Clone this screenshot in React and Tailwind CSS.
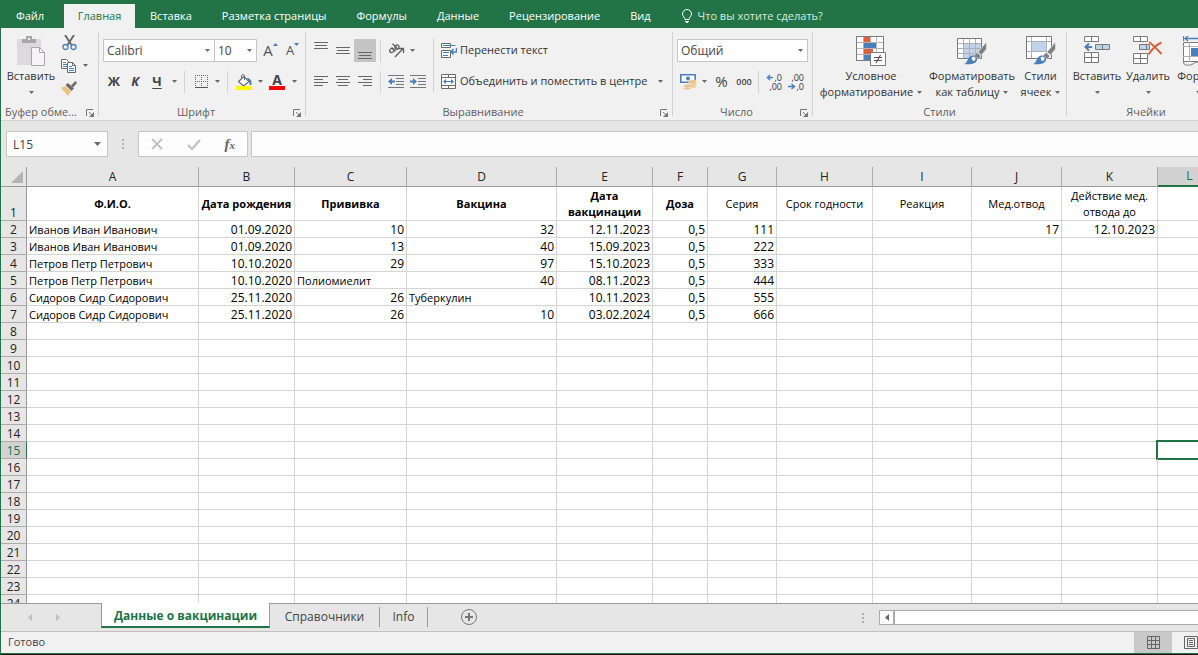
import clsx from 'clsx'

const TABS = ['Вставка', 'Разметка страницы', 'Формулы', 'Данные', 'Рецензирование', 'Вид']

const COLUMNS = [
  { id: 'A', width: 'w-[172px]', title: 'Ф.И.О.', bold: true },
  { id: 'B', width: 'w-[96px]', title: 'Дата рождения', bold: true },
  { id: 'C', width: 'w-[112px]', title: 'Прививка', bold: true },
  { id: 'D', width: 'w-[150px]', title: 'Вакцина', bold: true },
  { id: 'E', width: 'w-[96px]', title: 'Дата вакцинации', bold: true },
  { id: 'F', width: 'w-[55px]', title: 'Доза', bold: true },
  { id: 'G', width: 'w-[69px]', title: 'Серия' },
  { id: 'H', width: 'w-[96px]', title: 'Срок годности' },
  { id: 'I', width: 'w-[99px]', title: 'Реакция' },
  { id: 'J', width: 'w-[90px]', title: 'Мед.отвод' },
  { id: 'K', width: 'w-[96px]', title: 'Действие мед. отвода до' },
  { id: 'L', width: 'w-[64px]', title: '' },
]

const DATA = {
  2: { A: 'Иванов Иван Иванович', B: '01.09.2020', C: '10', D: '32', E: '12.11.2023', F: '0,5', G: '111', J: '17', K: '12.10.2023' },
  3: { A: 'Иванов Иван Иванович', B: '01.09.2020', C: '13', D: '40', E: '15.09.2023', F: '0,5', G: '222' },
  4: { A: 'Петров Петр Петрович', B: '10.10.2020', C: '29', D: '97', E: '15.10.2023', F: '0,5', G: '333' },
  5: { A: 'Петров Петр Петрович', B: '10.10.2020', C: 'Полиомиелит', D: '40', E: '08.11.2023', F: '0,5', G: '444' },
  6: { A: 'Сидоров Сидр Сидорович', B: '25.11.2020', C: '26', D: 'Туберкулин', E: '10.11.2023', F: '0,5', G: '555' },
  7: { A: 'Сидоров Сидр Сидорович', B: '25.11.2020', C: '26', D: '10', E: '03.02.2024', F: '0,5', G: '666' },
}

const ROWS = Array.from({ length: 23 }, (_, i) => i + 2)
const ACTIVE = { row: 15, col: 'L' }

const isNumeric = (value) => /^[\d.,]+$/.test(value)

/* ---------- small pieces ---------- */

const Icon = ({ w, h, children, className }) => (
  <svg width={w} height={h} viewBox={`0 0 ${w} ${h}`} fill="none" className={clsx('shrink-0', className)} aria-hidden="true">
    {children}
  </svg>
)

const Caret = ({ className }) => (
  <Icon w={5} h={3} className={className}>
    <path d="M0 0h5L2.500 3z" fill="#6a6a6a" />
  </Icon>
)

const Tool = ({ label, className, children }) => (
  <button type="button" aria-label={label} className={clsx('flex h-[23px] shrink-0 items-center justify-center', className)}>
    {children}
  </button>
)

const Separator = ({ className, color = 'bg-[#d2d2d2]' }) => <div className={clsx('w-px shrink-0', color, className)} />

const Group = ({ label, launcher, className, labelClass, children }) => (
  <section className={clsx('flex shrink-0 flex-col', className)} aria-label={label}>
    <div className="flex h-[76px]">{children}</div>
    <div className="flex h-4 items-center text-[11px] text-[#5f5f5f]">
      <span className={clsx('flex-1 whitespace-nowrap', labelClass || 'text-center')}>{label}</span>
      {launcher && (
        <button type="button" aria-label={`${label}: параметры`} className="mr-1 pt-px">
          <Icon w={8} h={8}>
            <path d="M.5 7V.5H7M3 3l3 3" stroke="#777" />
            <path d="M8 3v5H3z" fill="#777" />
          </Icon>
        </button>
      )}
    </div>
  </section>
)

const GroupDivider = () => <div className="my-1 w-px shrink-0 bg-[#d2d2d2]" />

const BigButton = ({ icon, lines, className }) => (
  <button type="button" className={clsx('flex shrink-0 flex-col items-center pt-2 leading-4 text-[#333]', className)}>
    <span className="flex h-8 items-start">{icon}</span>
    <span className="whitespace-nowrap">{lines[0]}</span>
    <span className="flex h-4 items-center gap-1 whitespace-nowrap">
      {lines[1]}
      <Caret />
    </span>
  </button>
)

const Combo = ({ label, options, className }) => (
  <div className={clsx('relative flex h-[23px] shrink-0 text-[12px]', className)}>
    <select aria-label={label} className="w-full appearance-none border border-[#c6c6c6] bg-white px-[3px] text-[#444]">
      {options.map((o) => (
        <option key={o}>{o}</option>
      ))}
    </select>
    <Caret className="pointer-events-none absolute top-[10px] right-[5px]" />
  </div>
)

/* ---------- icons ---------- */

const PasteIcon = () => (
  <Icon w={28} h={30}>
    <path d="M0 3h24v26H0z" fill="#dcd8dc" />
    <path d="M5 7V3h4V0h6v3h4v4z" fill="#a9a6a9" />
    <path d="M11 2h2v2h-2z" fill="#f1f1f1" />
    <path d="M14.500 11.500h8l5 5v13h-13z" fill="#f7f3f9" stroke="#a9a6a9" />
    <path d="M22.500 11.500v5h5" stroke="#a9a6a9" />
  </Icon>
)

const CutIcon = () => (
  <Icon w={15} h={16}>
    <path d="M3 0l6.500 10M12 0L5.500 10" stroke="#6a6a6a" strokeWidth="2" />
    <circle cx="3.500" cy="12" r="2.500" stroke="#4a7fb8" strokeWidth="1.300" />
    <circle cx="11.500" cy="12" r="2.500" stroke="#4a7fb8" strokeWidth="1.300" />
  </Icon>
)

const CopyIcon = () => (
  <Icon w={16} h={14}>
    <path d="M.5.500h5l2 2v7h-7z" fill="#fff" stroke="#6a6a6a" />
    <path d="M2 3.500h3M2 5.500h4M2 7.500h4" stroke="#4a7fb8" />
    <path d="M6.500 3.500h5l3 3v7h-8z" fill="#fff" stroke="#6a6a6a" />
    <path d="M11.500 3.500v3h3" stroke="#6a6a6a" />
    <path d="M8 7.500h3M8 9.500h5M8 11.500h5" stroke="#4a7fb8" />
  </Icon>
)

const PainterIcon = () => (
  <Icon w={16} h={15}>
    <path d="M0 7l4-2 6 5-3 5z" fill="#ecc17f" />
    <path d="M4.500 4L7 2l6 5.500L10.500 10z" fill="#6a6a6a" />
    <path d="M10 4.500L14.500 0 16 2l-4 4.500z" fill="#6a6a6a" />
  </Icon>
)

const BordersIcon = () => (
  <Icon w={13} h={13}>
    <path d="M0 .5h13M0 6.500h13" stroke="#6a6a6a" strokeDasharray="1 1" />
    <path d="M.5 0v12M6.500 0v12M12.500 0v12" stroke="#6a6a6a" strokeDasharray="1 1" />
    <path d="M0 12.500h13" stroke="#555" />
  </Icon>
)

const FillIcon = () => (
  <Icon w={16} h={16}>
    <path d="M2.500 7.500L8 2.500l5 5-5.500 4.500z" fill="#fff" stroke="#6a6a6a" strokeWidth="1.200" />
    <path d="M5.500 5V1.500c0-1 3-1 3 0V6" stroke="#6a6a6a" />
    <path d="M11 4c3 0 5 2 4.500 7h-2c0-3-.5-4-1.500-5z" fill="#4a7fb8" />
    <path d="M0 12h16v4H0z" fill="#ff0" />
  </Icon>
)

const HLines = ({ lines, w = 14, h = 13 }) => (
  <Icon w={w} h={h}>
    {lines.map(([x, y, len]) => (
      <path key={y} d={`M${x} ${y}.5h${len}`} stroke="#666" />
    ))}
  </Icon>
)

const IndentIcon = ({ right }) => (
  <Icon w={16} h={14}>
    <path d="M0 .5h16M8 3.500h8M8 6.500h8M8 9.500h8M0 12.500h16" stroke="#777" />
    {right ? (
      <path d="M0 5.500h3V3l4 3.500L3 10V7.500H0z" fill="#4a7fb8" />
    ) : (
      <path d="M7 5.500H4V3L0 6.500 4 10V7.500h3z" fill="#4a7fb8" />
    )}
  </Icon>
)

const OrientationIcon = () => (
  <Icon w={17} h={15}>
    <g stroke="#5f5f5f" strokeWidth="1.300">
      <ellipse cx="3.800" cy="7.500" rx="2.200" ry="1.900" transform="rotate(-45 3.800 7.500)" />
      <path d="M3.500 4.500l4 4" />
      <ellipse cx="9" cy="4.200" rx="2.200" ry="1.900" transform="rotate(-45 9 4.200)" />
      <path d="M4.500.8l5 5" />
      <path d="M7 14l8-8.500M11 5.500h4.500V10" />
    </g>
  </Icon>
)

const WrapIcon = () => (
  <Icon w={16} h={16}>
    <path d="M.5.500h9v4h-9zM.5 7.500h9v7h-9z" fill="#fff" stroke="#6a6a6a" />
    <path d="M2 2.500h12.500M2 9.500h6M2 12.500h5" stroke="#4a7fb8" />
    <path d="M15.500 5v4H10M12.500 6L10 8.800l2.500 2.700" stroke="#4a7fb8" strokeWidth="1.500" />
  </Icon>
)

const MergeIcon = () => (
  <Icon w={16} h={15}>
    <path d="M.5.500h14v14H.5z" fill="#fff" stroke="#6a6a6a" />
    <path d="M.5 3.500h14M.5 11.500h14M7.500.500v3M7.500 11.500v3" stroke="#6a6a6a" />
    <path d="M3 7.500h9" stroke="#4a7fb8" />
    <path d="M2 7.500L5 5v5zM13 7.500L10 5v5z" fill="#4a7fb8" />
  </Icon>
)

const MoneyIcon = () => (
  <Icon w={17} h={16}>
    <path d="M.8.800h14.400v7.400H.8z" fill="#fff" stroke="#4a7fb8" strokeWidth="1.600" />
    <circle cx="8" cy="4.500" r="2" fill="#4a7fb8" />
    <g fill="#ecc17f" stroke="#f1f1f1" strokeWidth=".6">
      <ellipse cx="12.500" cy="12" rx="4" ry="2" />
      <ellipse cx="12.500" cy="10" rx="4" ry="2" />
      <ellipse cx="12.500" cy="7.700" rx="4" ry="2" />
      <ellipse cx="7.500" cy="14" rx="4" ry="1.800" />
      <ellipse cx="7.500" cy="12" rx="4" ry="1.800" />
    </g>
  </Icon>
)

const DecimalIcon = ({ top, bottom, less }) => (
  <svg width="16" height="18" viewBox="0 0 16 18" overflow="visible" aria-hidden="true" className="shrink-0">
    <text x="16" y="8" textAnchor="end" fontSize="9" fill="#333">{top}</text>
    <text x="16" y="17" textAnchor="end" fontSize="9" fill="#333">{bottom}</text>
    {less ? (
      <path d="M0 13.500h6M3.500 11l3 2.500-3 2.500" fill="none" stroke="#4a7fb8" strokeWidth="1.500" />
    ) : (
      <path d="M1.500 4.500H7M4 2L1.500 4.500 4 7" fill="none" stroke="#4a7fb8" strokeWidth="1.500" />
    )}
  </svg>
)

const ConditionalIcon = () => (
  <Icon w={30} h={30}>
    <path d="M.5.500h27v24H.5z" fill="#fff" stroke="#7a7a7a" />
    <path d="M0 6.500h28M0 12.500h28M0 18.500h28M7.500 0v25M14.500 0v25M20.500 0v25" stroke="#b5b5b5" />
    <path d="M8 1h6v5H8zM8 13h9v5H8z" fill="#d9623f" />
    <path d="M8 7h12v5H8zM8 19h6v5H8z" fill="#4a7fb8" />
    <path d="M.5.500h27v24H.5z" stroke="#7a7a7a" />
    <path d="M14.500 16.500h15v13h-15z" fill="#fff" stroke="#7a7a7a" />
    <path d="M18 21.500h8M18 24.500h8M24.500 19l-4.500 8" stroke="#555" strokeWidth="1.200" />
  </Icon>
)

const Brush = () => (
  <>
    <path d="M29.500 6v7l-5 6-3.500-3z" fill="#7f7f7f" stroke="#f1f1f1" strokeWidth=".6" />
    <path d="M20 16.500l4 3.500-2.500 3-4.500-3.500z" fill="#7f7f7f" stroke="#f1f1f1" strokeWidth=".6" />
    <path d="M7 28c4-1 3-7 8-8.500 3-.5 5.500 2 5 4.500-1 4-7 5-13 4z" fill="#4a7fb8" />
    <path d="M14.500 22c1-2 4-1.500 4 .5s-2 3-3 2" fill="#fff" />
  </>
)

const TableStyleIcon = () => (
  <Icon w={30} h={30}>
    <path d="M.5 2.500h24v20H.5z" fill="#fff" />
    <path d="M7 8h18v15H7z" fill="#bfd3ea" />
    <path d="M0 7.500h25M0 12.500h25M0 17.500h25M6.500 2v20M12.500 2v20M18.500 2v20" stroke="#b0b0b0" />
    <path d="M.5 2.500h24v20H.5z" stroke="#7a7a7a" />
    <Brush />
  </Icon>
)

const CellStyleIcon = () => (
  <Icon w={30} h={30}>
    <path d="M.5.500h25v22H.5z" fill="#fff" stroke="#7a7a7a" />
    <path d="M0 5.500h26M0 15.500h26M5.500 0v23M20.500 0v23" stroke="#b0b0b0" />
    <path d="M6 6h14v9H6z" fill="#bfd3ea" />
    <path d="M.5.500h25v22H.5z" stroke="#7a7a7a" />
    <Brush />
  </Icon>
)

const InsertCellsIcon = () => (
  <Icon w={27} h={28}>
    <path d="M.5.500h14v5H.5zM7.500.500v5M.5 16.500h14v10H.5zM7.500 16.500v10M.5 21.500h14" fill="#fff" stroke="#7a7a7a" />
    <path d="M11.500 8.500h14v5h-14zM18.500 8.500v5" fill="#bfd3ea" stroke="#7a7a7a" />
    <path d="M8 11H2M5 7.500L1.500 11 5 14.500" stroke="#4a7fb8" strokeWidth="2" />
  </Icon>
)

const DeleteCellsIcon = () => (
  <Icon w={30} h={28}>
    <path d="M.5.500h14v5H.5zM7.500.500v5M.5 17.500h14v10H.5zM7.500 17.500v10M.5 22.500h14" fill="#fff" stroke="#7a7a7a" />
    <path d="M6.500 8.500h10v5h-10zM13.500 8.500v5" fill="#bfd3ea" stroke="#7a7a7a" />
    <path d="M16 6c4 3 8 7 12.500 12M28.500 6.500C23 9 19 13 15.500 18.500" stroke="#d9623f" strokeWidth="2" />
  </Icon>
)

const FormatCellsIcon = () => (
  <Icon w={30} h={30}>
    <path d="M.5 0v5M2 2.500h26M5 0L2 2.500 5 5M29.500 0v5" stroke="#4a7fb8" strokeWidth="1.300" />
    <path d="M.5 6.500h29v19H.5z" fill="#fff" stroke="#7a7a7a" />
    <path d="M0 10.500h30M0 20.500h30M6.500 6v20M23.500 6v20" stroke="#b0b0b0" />
    <path d="M8 12h14v8H8z" fill="#4a7fb8" />
    <path d="M.5 26c0 4 5 3 7 3s4-3 7-3 5 3 8 3 7 1 7-3" stroke="#7a7a7a" />
  </Icon>
)

/* ---------- sections ---------- */

const TabStrip = () => (
  <nav className="flex h-7 shrink-0 items-end overflow-hidden bg-[#227447] whitespace-nowrap text-white">
    <button type="button" className="h-6 w-[62px] shrink-0 pr-1">Файл</button>
    <button type="button" className="ml-px h-6 w-[71px] shrink-0 bg-[#f1f1f1] text-[#227447]">Главная</button>
    {TABS.map((tab) => (
      <button type="button" key={tab} className="h-6 shrink-0 px-[15px]">{tab}</button>
    ))}
    <button type="button" className="ml-4 flex h-6 shrink-0 items-center gap-[6px] text-[#d9eadf]">
      <Icon w={10} h={14}>
        <path d="M3 10.500c0-2-2.500-3-2.500-5.500a4.500 4.500 0 0 1 9 0c0 2.500-2.500 3.500-2.500 5.500zM3 12.500h4M4 13.500h2" stroke="#fff" />
      </Icon>
      Что вы хотите сделать?
    </button>
  </nav>
)

const ClipboardGroup = () => (
  <Group label="Буфер обме..." launcher className="w-[97px]" labelClass="pl-1">
    <BigButton className="w-[60px]" icon={<PasteIcon />} lines={['Вставить', '']} />
    <div className="flex flex-col pt-[3px]">
      <Tool label="Вырезать" className="w-4"><CutIcon /></Tool>
      <div className="flex items-center">
        <Tool label="Копировать" className="w-4"><CopyIcon /></Tool>
        <Tool label="Параметры копирования" className="w-[17px]"><Caret /></Tool>
      </div>
      <Tool label="Формат по образцу" className="w-4"><PainterIcon /></Tool>
    </div>
  </Group>
)

const FontGroup = () => (
  <Group label="Шрифт" launcher className="w-[206px]">
    <div className="flex flex-col gap-2 pt-[11px] pl-1">
      <div className="flex items-center">
        <Combo label="Шрифт" options={['Calibri']} className="w-[112px]" />
        <Combo label="Размер шрифта" options={['10']} className="-ml-px w-[43px]" />
        <Tool label="Увеличить размер шрифта" className="ml-[2px] w-[23px] text-[15px] text-[#555]">
          A<Icon w={5} h={3} className="mb-3"><path d="M0 3h5L2.500 0z" fill="#4a7fb8" /></Icon>
        </Tool>
        <Tool label="Уменьшить размер шрифта" className="w-[21px] text-[13px] text-[#555]">
          A<Icon w={5} h={3} className="mb-3"><path d="M0 0h5L2.500 3z" fill="#4a7fb8" /></Icon>
        </Tool>
      </div>
      <div className="flex items-center text-[13px] font-bold text-[#444]">
        <Tool label="Полужирный" className="w-[22px]">Ж</Tool>
        <Tool label="Курсив" className="w-[20px] italic">К</Tool>
        <Tool label="Подчёркнутый" className="w-[24px] underline underline-offset-2">Ч</Tool>
        <Tool label="Вид подчёркивания" className="w-[10px]"><Caret /></Tool>
        <Separator className="mx-[5px] h-[22px]" />
        <Tool label="Границы" className="w-[22px]"><BordersIcon /></Tool>
        <Tool label="Вид границ" className="w-[10px]"><Caret /></Tool>
        <Separator className="mx-[5px] h-[22px]" />
        <Tool label="Цвет заливки" className="w-[22px]"><FillIcon /></Tool>
        <Tool label="Выбор заливки" className="w-[10px]"><Caret /></Tool>
        <Tool label="Цвет текста" className="w-6 flex-col">
          <span className="text-[14px] leading-[13px]">А</span>
          <span className="h-1 w-4 bg-[#f00]" />
        </Tool>
        <Tool label="Выбор цвета текста" className="w-[10px]"><Caret /></Tool>
      </div>
    </div>
  </Group>
)

const AlignmentGroup = () => (
  <Group label="Выравнивание" launcher className="w-[366px]">
    <div className="flex flex-col gap-2 pt-[11px] pl-1">
      <div className="flex items-center">
        <Tool label="По верхнему краю" className="w-[22px] pb-2"><HLines lines={[[0, 2, 14], [1, 5, 12], [0, 8, 14]]} /></Tool>
        <Tool label="По середине" className="w-[22px]"><HLines lines={[[0, 3, 14], [1, 6, 12], [0, 9, 14]]} /></Tool>
        <Tool label="По нижнему краю" className="w-[22px] bg-[#c5c5c5] pt-2"><HLines lines={[[0, 4, 14], [1, 7, 12], [0, 10, 14]]} /></Tool>
        <Separator className="mx-1 h-[22px]" />
        <Tool label="Ориентация" className="w-[22px]"><OrientationIcon /></Tool>
        <Tool label="Вид ориентации" className="w-[10px]"><Caret /></Tool>
      </div>
      <div className="flex items-center">
        <Tool label="По левому краю" className="w-[22px]"><HLines lines={[[0, 1, 14], [0, 4, 9], [0, 7, 14], [0, 10, 9]]} /></Tool>
        <Tool label="По центру" className="w-[22px]"><HLines lines={[[0, 1, 14], [2, 4, 10], [0, 7, 14], [2, 10, 10]]} /></Tool>
        <Tool label="По правому краю" className="w-[22px]"><HLines lines={[[0, 1, 14], [5, 4, 9], [0, 7, 14], [5, 10, 9]]} /></Tool>
        <Separator className="mx-1 h-[22px]" />
        <Tool label="Уменьшить отступ" className="w-[22px]"><IndentIcon /></Tool>
        <Tool label="Увеличить отступ" className="w-[22px]"><IndentIcon right /></Tool>
      </div>
    </div>
    <Separator className="mt-[10px] ml-[4px] h-[54px]" />
    <div className="flex flex-1 flex-col gap-2 pt-[11px] pl-[7px] text-[#333]">
      <button type="button" className="flex h-[23px] items-center gap-[3px] whitespace-nowrap">
        <WrapIcon />
        Перенести текст
      </button>
      <div className="flex justify-between">
        <button type="button" className="flex h-[23px] items-center gap-[3px] whitespace-nowrap">
          <MergeIcon />
          Объединить и поместить в центре
        </button>
        <Tool label="Варианты объединения" className="mr-[5px] w-[14px]"><Caret /></Tool>
      </div>
    </div>
  </Group>
)

const NumberGroup = () => (
  <Group label="Число" launcher className="w-[139px]">
    <div className="flex flex-col gap-2 pt-[11px] pl-1">
      <Combo label="Числовой формат" options={['Общий']} className="w-[131px]" />
      <div className="flex items-center text-[#444]">
        <Tool label="Финансовый формат" className="w-[22px]"><MoneyIcon /></Tool>
        <Tool label="Вид финансового формата" className="w-[10px]"><Caret /></Tool>
        <Tool label="Процентный формат" className="w-[25px] text-[15px]">%</Tool>
        <Tool label="Формат с разделителями" className="w-5 text-[9px] font-semibold">000</Tool>
        <Separator className="mx-1 h-[22px]" />
        <Tool label="Увеличить разрядность" className="w-[22px]"><DecimalIcon top=",0" bottom=",00" /></Tool>
        <Tool label="Уменьшить разрядность" className="w-[22px]"><DecimalIcon top=",00" bottom=",0" less /></Tool>
      </div>
    </div>
  </Group>
)

const Ribbon = () => (
  <div className="flex h-[93px] shrink-0 overflow-hidden border-b border-[#d2d2d2] bg-[#f1f1f1]">
    <ClipboardGroup />
    <GroupDivider />
    <FontGroup />
    <GroupDivider />
    <AlignmentGroup />
    <GroupDivider />
    <NumberGroup />
    <GroupDivider />
    <Group label="Стили" className="w-[253px]">
      <BigButton className="w-[116px]" icon={<ConditionalIcon />} lines={['Условное', 'форматирование']} />
      <BigButton className="w-[86px]" icon={<TableStyleIcon />} lines={['Форматировать', 'как таблицу']} />
      <BigButton className="w-[51px]" icon={<CellStyleIcon />} lines={['Стили', 'ячеек']} />
    </Group>
    <GroupDivider />
    <Group label="Ячейки" className="w-[158px]">
      <BigButton className="ml-1 w-[52px]" icon={<InsertCellsIcon />} lines={['Вставить', '']} />
      <BigButton className="w-[50px]" icon={<DeleteCellsIcon />} lines={['Удалить', '']} />
      <BigButton className="w-[50px]" icon={<FormatCellsIcon />} lines={['Формат', '']} />
    </Group>
  </div>
)

const Dots = ({ className }) => (
  <div className={clsx('flex flex-col gap-0.5', className)}>
    <i className="size-0.5 bg-[#b0b0b0]" />
    <i className="size-0.5 bg-[#b0b0b0]" />
    <i className="size-0.5 bg-[#b0b0b0]" />
  </div>
)

const FormulaBar = () => (
  <div className="flex h-[46px] shrink-0 items-center pl-[5px] text-[12px] text-[#444]">
    <div className="flex h-[26px] w-[102px] shrink-0 items-center border border-[#c6c6c6] bg-[#fdfdfd]">
      <input aria-label="Имя ячейки" defaultValue="L15" className="h-full w-0 flex-1 pl-[6px] outline-none" />
      <button type="button" aria-label="Список имён" className="px-[6px]">
        <Icon w={7} h={4}><path d="M0 0h7L3.500 4z" fill="#6a6a6a" /></Icon>
      </button>
    </div>
    <Dots className="mx-[14px]" />
    <div className="flex h-[26px] w-[110px] shrink-0 items-center justify-around border border-[#c6c6c6] bg-[#fdfdfd]">
      <button type="button" aria-label="Отмена">
        <Icon w={12} h={12}><path d="M1 1l10 10M11 1L1 11" stroke="#c0c0c0" strokeWidth="1.800" /></Icon>
      </button>
      <button type="button" aria-label="Ввод">
        <Icon w={14} h={11}><path d="M1 6l4 4 8-9" stroke="#c0c0c0" strokeWidth="2.200" /></Icon>
      </button>
      <button type="button" aria-label="Вставить функцию" className="font-['Liberation_Serif',serif] text-[15px] font-bold text-[#666] italic">
        f<span className="text-[11px]">x</span>
      </button>
    </div>
    <input aria-label="Строка формул" className="ml-[3px] h-[26px] w-0 flex-1 border border-r-0 border-[#c6c6c6] bg-[#fdfdfd] px-2 outline-none" />
  </div>
)

const RowHeader = ({ n }) => (
  <th
    scope="row"
    className={clsx(
      'border-r border-b border-b-[#ababab] px-0 pt-0.5 pb-0 align-bottom leading-[14px] font-normal',
      n === ACTIVE.row ? 'border-r-[#217346] bg-[#d2d2d2] text-[#217346]' : 'border-r-[#9b9b9b] bg-[#e6e6e6] text-[#222]'
    )}
  >
    {n}
  </th>
)

const Sheet = () => (
  <main className="min-h-0 flex-1 overflow-hidden bg-white">
    <table className="w-max table-fixed border-separate border-spacing-0 text-[12px] text-black">
      <thead>
        <tr className="h-5 bg-[#e6e6e6]">
          <th className="w-[26px] border-r border-b border-[#9b9b9b] p-0 align-bottom">
            <Icon w={12} h={12} className="mb-[3px] ml-[10px]"><path d="M12 0v12H0z" fill="#b4b4b4" /></Icon>
          </th>
          {COLUMNS.map(({ id, width }) => (
            <th
              key={id}
              scope="col"
              className={clsx(
                width,
                'p-0 leading-[18px] font-normal',
                id === ACTIVE.col
                  ? 'border-r border-b-2 border-r-[#ababab] border-b-[#217346] bg-[#d2d2d2] text-[#217346]'
                  : 'border-r border-b border-r-[#ababab] border-b-[#9b9b9b] text-[#222]'
              )}
            >
              {id}
            </th>
          ))}
        </tr>
      </thead>
      <tbody>
        <tr className="h-[34px]">
          <RowHeader n={1} />
          {COLUMNS.map(({ id, title, bold }) => (
            <td
              key={id}
              className={clsx('border-r border-b border-[#d4d4d4] p-0 text-center text-[11px] leading-4', bold && 'font-bold')}
            >
              {title}
            </td>
          ))}
        </tr>
        {ROWS.map((n) => (
          <tr key={n} className="h-[17px]">
            <RowHeader n={n} />
            {COLUMNS.map(({ id }) => {
              const value = DATA[n]?.[id] ?? ''
              return (
                <td
                  key={id}
                  className={clsx(
                    'relative border-r border-b border-[#d4d4d4] px-0.5 pt-0.5 pb-0 leading-[14px] whitespace-nowrap',
                    isNumeric(value) ? 'text-right text-[12px]' : 'text-[11px]'
                  )}
                >
                  {value}
                  {n === ACTIVE.row && id === ACTIVE.col && (
                    <span className="absolute -top-0.5 -right-0.5 -bottom-0.5 -left-0.5 border-2 border-[#217346]" />
                  )}
                </td>
              )
            })}
          </tr>
        ))}
      </tbody>
    </table>
  </main>
)

const SheetTabs = () => (
  <div className="flex h-7 shrink-0 border-t border-[#9b9b9b] text-[12px] whitespace-nowrap text-[#444]">
    <div className="flex w-[100px] shrink-0 items-center gap-6 pl-[27px]">
      <button type="button" aria-label="Предыдущий лист">
        <Icon w={4} h={7}><path d="M4 0v7L0 3.500z" fill="#c0c0c0" /></Icon>
      </button>
      <button type="button" aria-label="Следующий лист">
        <Icon w={4} h={7}><path d="M0 0v7l4-3.500z" fill="#c0c0c0" /></Icon>
      </button>
    </div>
    <button type="button" className="-mt-px h-[25px] w-[169px] shrink-0 border-x border-b-2 border-x-[#9b9b9b] border-b-[#217346] bg-white pt-0.5 font-bold text-[#217346]">
      Данные о вакцинации
    </button>
    <div className="flex h-[26px] items-center">
      <button type="button" className="w-[109px]">Справочники</button>
      <Separator className="h-5" color="bg-[#9b9b9b]" />
      <button type="button" className="w-[47px]">Info</button>
      <Separator className="h-5" color="bg-[#9b9b9b]" />
      <button type="button" aria-label="Новый лист" className="ml-8">
        <Icon w={18} h={18}>
          <circle cx="9" cy="9" r="7.500" stroke="#777" />
          <path d="M9 5v8M5 9h8" stroke="#777" strokeWidth="2" />
        </Icon>
      </button>
    </div>
    <div className="ml-auto flex h-[27px] w-[336px] items-center">
      <Dots />
      <div className="ml-[15px] flex h-[15px] flex-1 border border-r-0 border-[#ababab] bg-white">
        <button type="button" aria-label="Прокрутить влево" className="flex w-[15px] items-center justify-center border-r-2 border-[#ababab]">
          <Icon w={4} h={7}><path d="M4 0v7L0 3.500z" fill="#666" /></Icon>
        </button>
      </div>
    </div>
  </div>
)

const StatusBar = () => (
  <footer className="flex h-[23px] shrink-0 items-stretch border-t border-b border-t-[#c0c0c0] border-b-[#217346] bg-[#f1f1f1] text-[#444]">
    <span className="flex items-center pl-[7px]">Готово</span>
    <button type="button" aria-label="Обычный" className="ml-auto flex w-[38px] items-center justify-center bg-[#c9c9c9]">
      <Icon w={13} h={13}>
        <path d="M.5.500h12v12H.5zM4.500 0v13M8.500 0v13M0 4.500h13M0 8.500h13" stroke="#666" />
      </Icon>
    </button>
    <button type="button" aria-label="Разметка страницы" className="flex w-[26px] items-center justify-end">
      <Icon w={14} h={13}>
        <path d="M.5.500h13v12H.5zM3.500 2.500h7v8h-7zM5 4.500h4M5 6.500h4M5 8.500h4" stroke="#666" />
      </Icon>
    </button>
  </footer>
)

export default function App() {
  return (
    <div className="flex h-screen flex-col overflow-hidden border-b border-l border-b-[#1c1216] border-l-[#217346] bg-[#e6e6e6] font-['Open_Sans','Noto_Sans',sans-serif] text-[11px]">
      <TabStrip />
      <Ribbon />
      <FormulaBar />
      <Sheet />
      <SheetTabs />
      <StatusBar />
    </div>
  )
}
